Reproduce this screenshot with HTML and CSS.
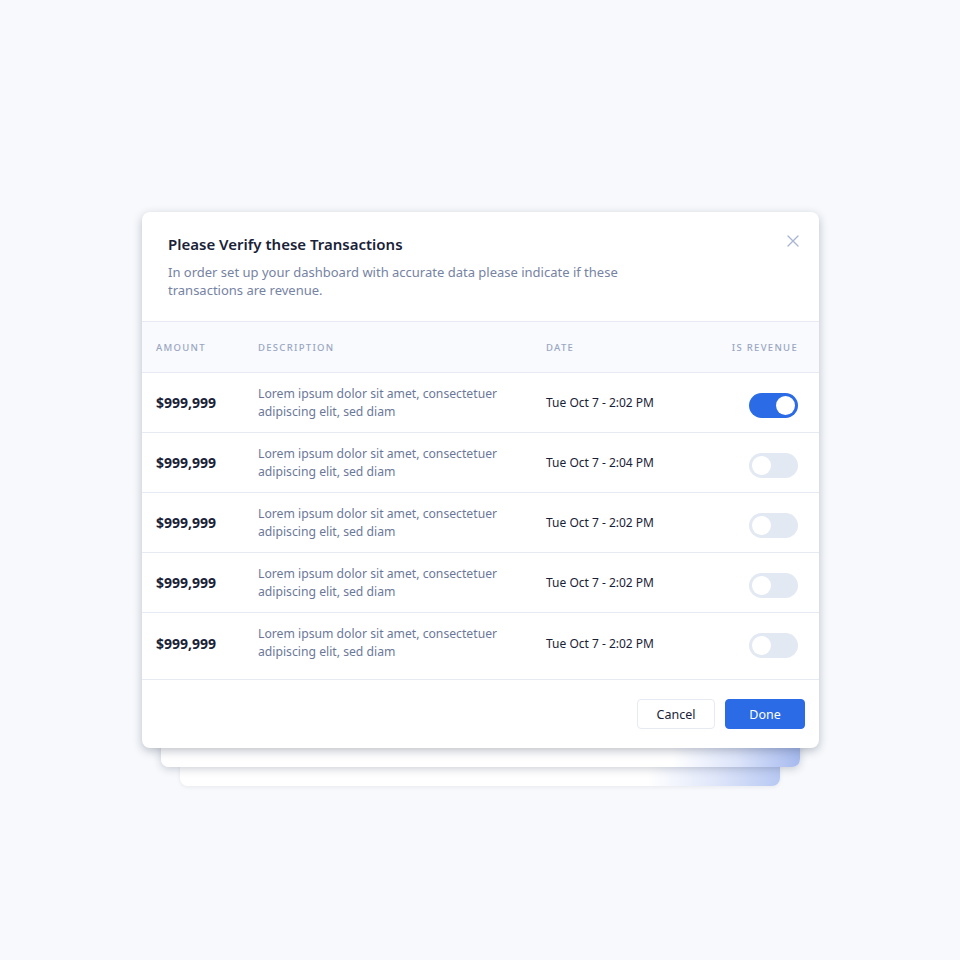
FILE: index.html
```html
<!DOCTYPE html>
<html>
<head>
<meta charset="utf-8">
<link rel="stylesheet" href="styles.css">
</head>
<body>
<div class="stage">
  <div class="stack">
    <div class="back back2"></div>
    <div class="back back1"></div>
    <div class="modal">
      <div class="head">
        <h1 class="title">Please Verify these Transactions</h1>
        <p class="sub">In order set up your dashboard with accurate data please indicate if these transactions are revenue.</p>
        <button class="close" aria-label="Close">
          <svg width="12" height="12" viewBox="0 0 12 12"><path d="M1 1L11 11M11 1L1 11" stroke="#a9b6d3" stroke-width="1.4" stroke-linecap="round"/></svg>
        </button>
      </div>
      <div class="thead">
        <div class="c-amt">Amount</div>
        <div class="c-desc">Description</div>
        <div class="c-date">Date</div>
        <div class="c-rev">Is Revenue</div>
      </div>
      <div class="row">
        <div class="c-amt amt">$999,999</div>
        <div class="c-desc desc">Lorem ipsum dolor sit amet, consectetuer adipiscing elit, sed diam</div>
        <div class="c-date date">Tue Oct 7 - 2:02 PM</div>
        <div class="c-rev"><span class="toggle on"><span class="knob"></span></span></div>
      </div>
      <div class="row">
        <div class="c-amt amt">$999,999</div>
        <div class="c-desc desc">Lorem ipsum dolor sit amet, consectetuer adipiscing elit, sed diam</div>
        <div class="c-date date">Tue Oct 7 - 2:04 PM</div>
        <div class="c-rev"><span class="toggle"><span class="knob"></span></span></div>
      </div>
      <div class="row">
        <div class="c-amt amt">$999,999</div>
        <div class="c-desc desc">Lorem ipsum dolor sit amet, consectetuer adipiscing elit, sed diam</div>
        <div class="c-date date">Tue Oct 7 - 2:02 PM</div>
        <div class="c-rev"><span class="toggle"><span class="knob"></span></span></div>
      </div>
      <div class="row">
        <div class="c-amt amt">$999,999</div>
        <div class="c-desc desc">Lorem ipsum dolor sit amet, consectetuer adipiscing elit, sed diam</div>
        <div class="c-date date">Tue Oct 7 - 2:02 PM</div>
        <div class="c-rev"><span class="toggle"><span class="knob"></span></span></div>
      </div>
      <div class="row last">
        <div class="c-amt amt">$999,999</div>
        <div class="c-desc desc">Lorem ipsum dolor sit amet, consectetuer adipiscing elit, sed diam</div>
        <div class="c-date date">Tue Oct 7 - 2:02 PM</div>
        <div class="c-rev"><span class="toggle"><span class="knob"></span></span></div>
      </div>
      <div class="foot">
        <button class="btn cancel">Cancel</button>
        <button class="btn done">Done</button>
      </div>
    </div>
  </div>
</div>
</body>
</html>
```
FILE: styles.css
```css
* { box-sizing: border-box; }
html, body { margin: 0; padding: 0; }
body {
  background: #f7f9fc;
  font-family: "Noto Sans", "Open Sans", sans-serif;
  color: #1a2238;
}
.stage {
  width: 960px;
  height: 960px;
  padding: 212px 141px 0 142px;
}
.stack {
  position: relative;
  width: 677px;
}
.back {
  position: absolute;
  border-radius: 8px;
}
.back1 {
  left: 19px; right: 19px; top: 40px; bottom: -19px;
  background: linear-gradient(90deg, #ffffff 0%, #ffffff 80%, #dde5fa 90%, #a6baee 100%);
  box-shadow: 0 2px 8px rgba(30, 40, 70, 0.22);
}
.back2 {
  left: 38px; right: 39px; top: 60px; bottom: -38px;
  background: linear-gradient(90deg, #ffffff 0%, #ffffff 78%, #e0e7fa 89%, #b7c8f2 100%);
  box-shadow: 0 1px 4px rgba(30, 40, 70, 0.08);
}
.modal {
  position: relative;
  background: #fff;
  border-radius: 8px;
  box-shadow: 0 3px 10px rgba(30, 40, 70, 0.28);
  overflow: hidden;
}
.head {
  position: relative;
  padding: 22px 26px 22px;
  border-bottom: 1px solid #e6ebf3;
}
.title {
  margin: 0;
  font-size: 15px;
  font-weight: 600;
  line-height: 21px;
  color: #1a2238;
}
.sub {
  margin: 8px 0 0;
  width: 470px;
  font-size: 13px;
  line-height: 18px;
  color: #7683a3;
}
.close {
  position: absolute;
  top: 22px;
  right: 19px;
  width: 14px;
  height: 14px;
  padding: 0;
  border: 0;
  background: none;
  display: flex;
  align-items: center;
  justify-content: center;
}
.thead, .row {
  display: flex;
  align-items: center;
  padding: 0 21px 0 14px;
}
.thead {
  height: 51px;
  background: #f8fafd;
  border-bottom: 1px solid #e6ebf3;
  font-size: 9.5px;
  letter-spacing: 1.3px;
  text-transform: uppercase;
  color: #9aa6c2;
  font-weight: 500;
}
.c-amt { width: 102px; flex: none; }
.c-desc { width: 288px; flex: none; }
.c-date { flex: 1; }
.c-rev { flex: none; text-align: right; display: flex; justify-content: flex-end; }
.row {
  height: 60px;
  border-bottom: 1px solid #e6ebf3;
}
.row.last { height: 67px; padding-bottom: 6px; }
.amt {
  font-size: 14px;
  font-weight: 700;
  color: #1a2238;
}
.desc {
  font-size: 12.2px;
  line-height: 18px;
  color: #6b7899;
  padding-right: 40px;
}
.date {
  font-size: 12px;
  color: #1a2238;
}
.toggle {
  width: 49px;
  height: 25px;
  border-radius: 13px;
  background: #e3e9f3;
  display: flex;
  align-items: center;
  padding: 3px;
  margin-top: 5px;
}
.toggle .knob {
  width: 19px;
  height: 19px;
  border-radius: 50%;
  background: #fff;
}
.toggle.on {
  background: #2b6be6;
  justify-content: flex-end;
}
.foot {
  display: flex;
  justify-content: flex-end;
  gap: 10px;
  padding: 19px 14px 19px;
}
.btn {
  height: 30px;
  border-radius: 4px;
  font-family: inherit;
  font-size: 12.5px;
  padding: 0;
}
.cancel {
  width: 78px;
  background: #fff;
  border: 1px solid #e6eaf2;
  color: #1a2238;
}
.done {
  width: 80px;
  background: #2b6be6;
  border: 1px solid #2b6be6;
  color: #fff;
}
```
